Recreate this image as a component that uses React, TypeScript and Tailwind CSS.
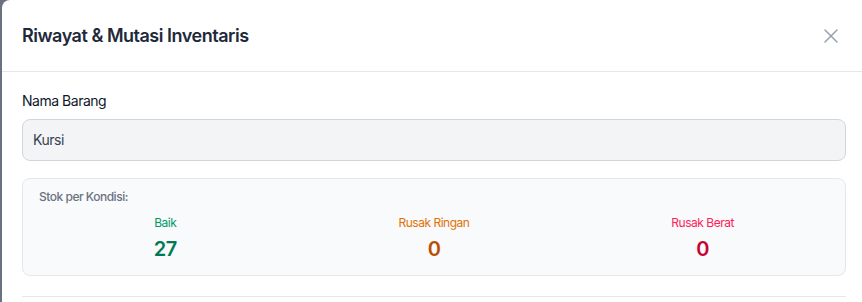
import { X } from "lucide-react";

const stocks = [
  { label: "Baik", value: 27, labelClass: "text-emerald-600", valueClass: "text-emerald-700" },
  { label: "Rusak Ringan", value: 0, labelClass: "text-amber-600", valueClass: "text-amber-700" },
  { label: "Rusak Berat", value: 0, labelClass: "text-rose-500", valueClass: "text-rose-700" },
];

const StockCard = () => {
  return (
    <div className="mt-[17px] rounded-lg border border-gray-200 bg-gray-50 px-4 pb-3 pt-2.5">
      <p className="text-xs font-medium leading-4 text-gray-500">Stok per Kondisi:</p>
      <div className="mt-2.5 grid grid-cols-3 gap-4">
        {stocks.map((s) => (
          <div key={s.label} className="flex flex-col items-center">
            <span className={`text-xs leading-4 ${s.labelClass}`}>{s.label}</span>
            <span className={`mt-1 text-xl font-semibold leading-7 ${s.valueClass}`}>{s.value}</span>
          </div>
        ))}
      </div>
    </div>
  );
};

export default function App() {
  return (
    <div className="flex h-[302px] w-[862px] overflow-hidden bg-gray-500 font-['Inter',sans-serif] tracking-[-0.03em]">
      <div className="ml-[2px] flex w-[876px] shrink-0 flex-col rounded-tl-lg bg-white">
        <header className="flex h-[72px] items-center justify-between border-b border-gray-200 pl-5 pr-[35px]">
          <h2 className="text-lg font-semibold text-gray-800">Riwayat &amp; Mutasi Inventaris</h2>
          <X className="h-6 w-6 text-gray-400" strokeWidth={1.5} />
        </header>
        <section className="w-[844px] pl-5 pt-[19px]">
          <label className="block text-sm leading-5 text-gray-900">Nama Barang</label>
          <div className="mt-2 flex h-[42px] items-center rounded-lg border border-gray-300 bg-gray-100 px-2.5 text-sm text-gray-700">
            Kursi
          </div>
          <StockCard />
          <div className="mt-5 border-t border-gray-200" />
        </section>
      </div>
    </div>
  );
}
